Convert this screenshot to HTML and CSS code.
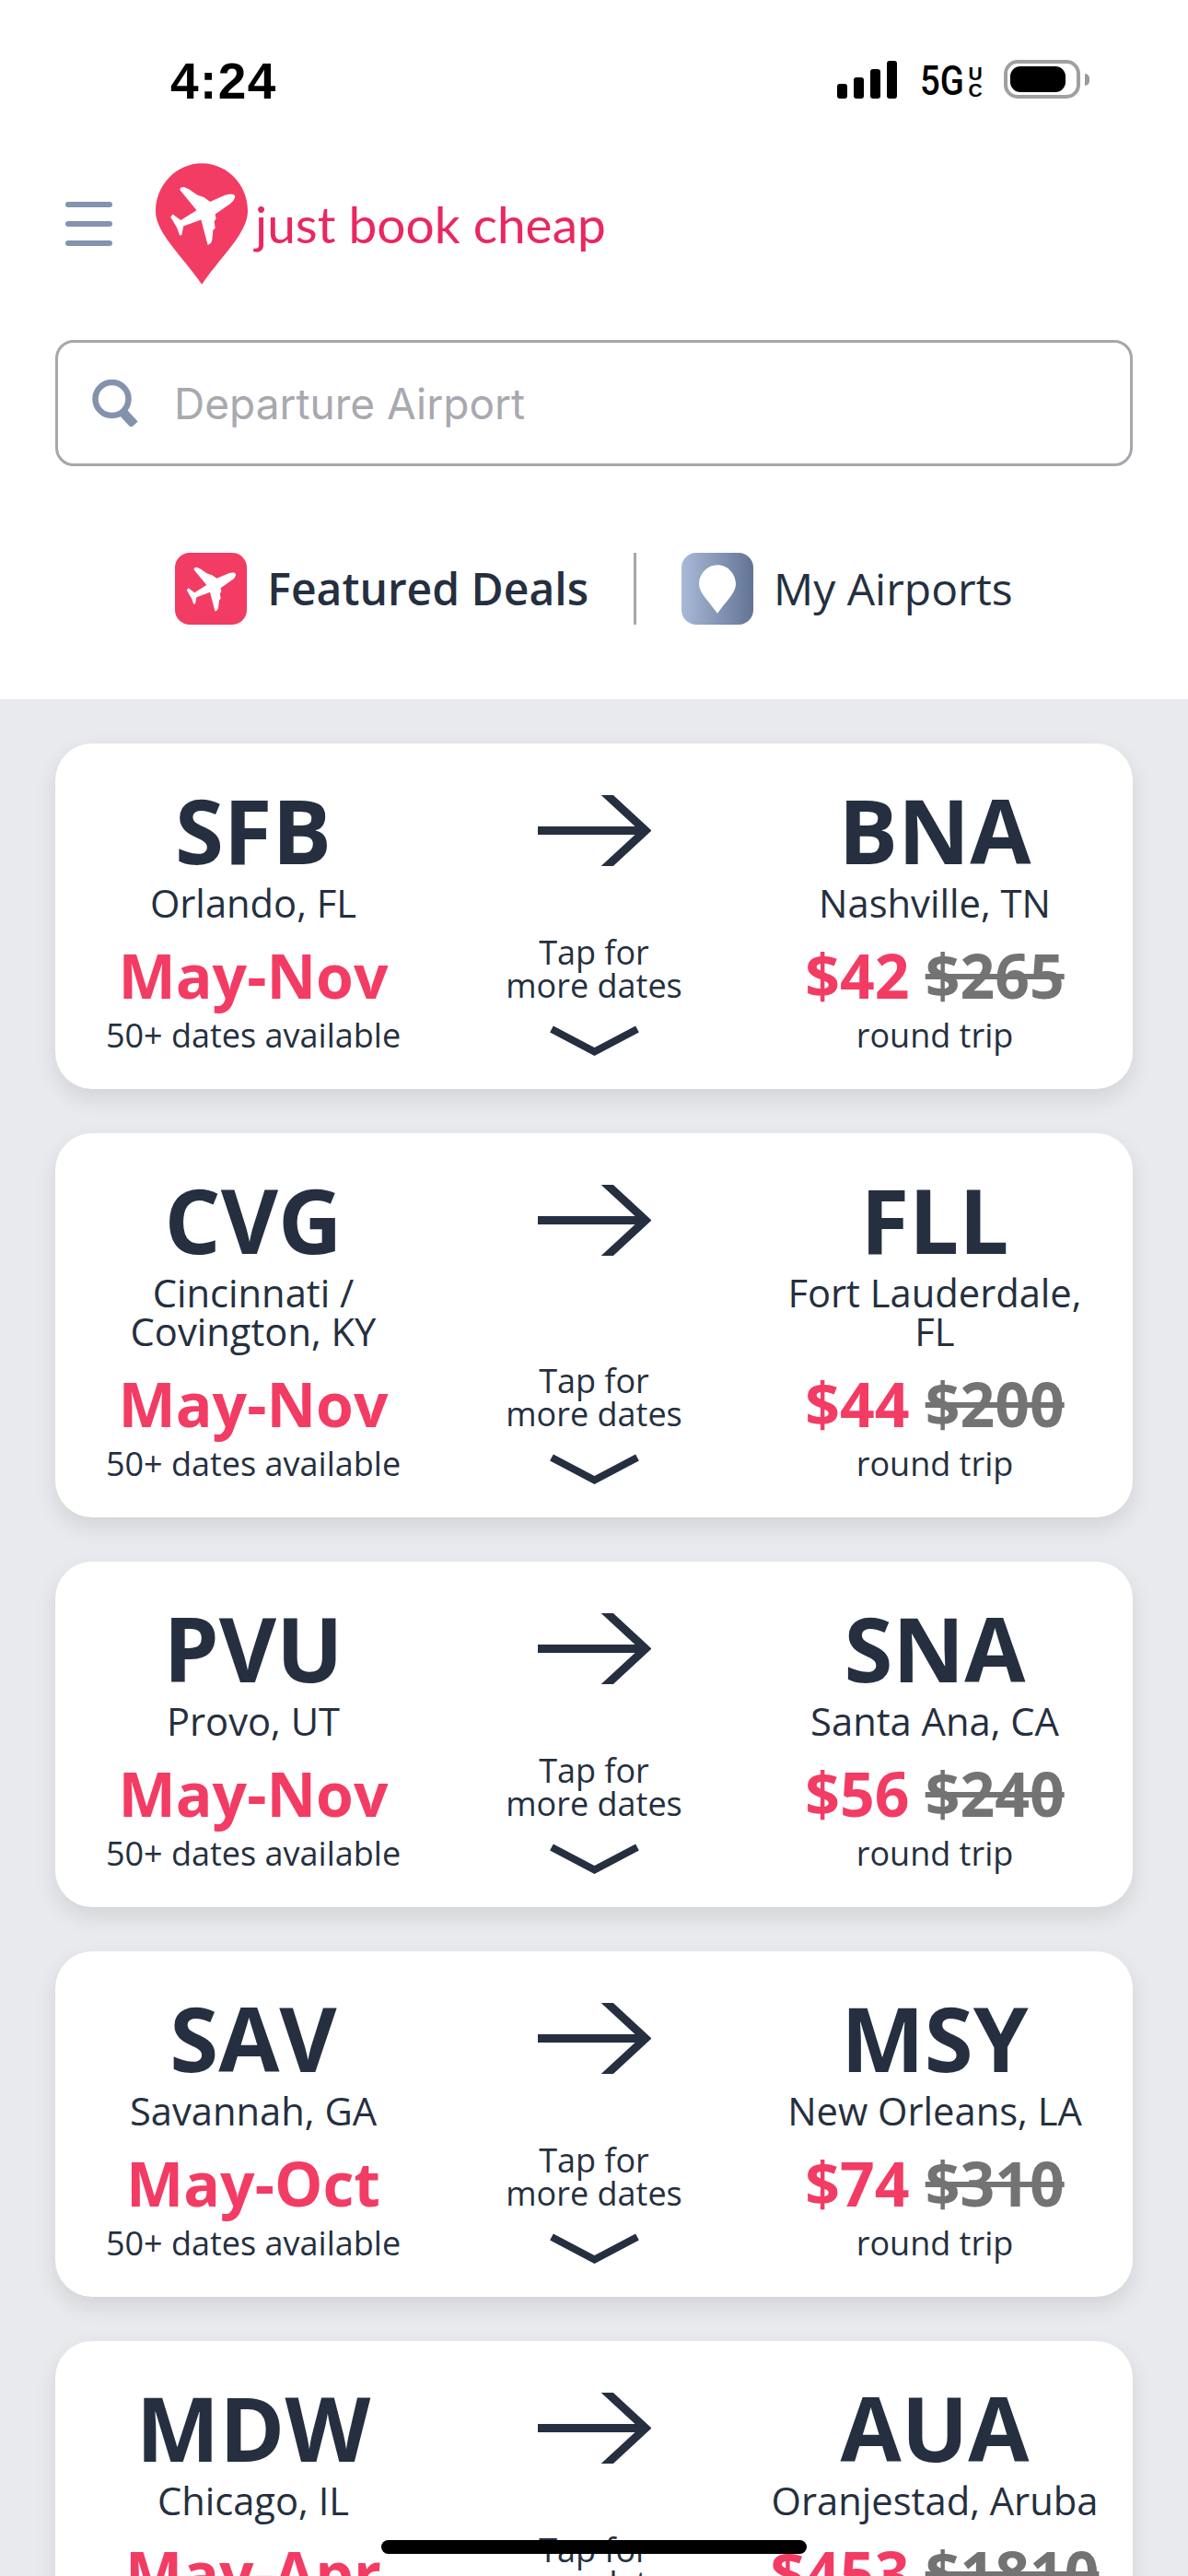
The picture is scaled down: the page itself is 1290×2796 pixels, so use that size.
FILE: index.html
```html
<!DOCTYPE html>
<html lang="en">
<head>
<meta charset="utf-8">
<title>just book cheap</title>
<link rel="stylesheet" href="styles.css">
</head>
<body>
<svg class="defs" width="0" height="0" aria-hidden="true">
  <symbol id="plane" viewBox="70 94 222 198">
    <path d="M288 126C290 136 280 147 272 153L222 188L225 203L219 212L222 235L215 241L212 272C211 282 204 290 197 290L175 206L116 228L110 258L103 258L95 235L73 197L80 188L107 208L160 175L105 108C102 100 110 95 118 97L135 105L148 114L163 124L184 131L205 146L255 124C268 120 284 118 288 126Z"/>
  </symbol>
  <symbol id="arrow" viewBox="0 0 123 77">
    <path d="M0 38.5H114" fill="none" stroke="currentColor" stroke-width="9"/>
    <polyline points="72,-3 117,38.5 72,80" fill="none" stroke="currentColor" stroke-width="9"/>
  </symbol>
  <symbol id="chevron" viewBox="0 0 99 33">
    <polyline points="3,4 49.5,28.5 96,4" fill="none" stroke="currentColor" stroke-width="8"/>
  </symbol>
</svg>

<header class="header">
  <div class="status">
    <span class="time">4:24</span>
    <div class="status-right">
      <div class="signal"><i class="bar bar-1"></i><i class="bar bar-2"></i><i class="bar bar-3"></i><i class="bar bar-4"></i></div>
      <span class="net">5G</span>
      <span class="uc"><b>U</b><b>C</b></span>
      <div class="battery"><i class="battery-fill"></i></div>
      <i class="battery-nub"></i>
    </div>
  </div>

  <div class="nav">
    <div class="burger"><i></i><i></i><i></i></div>
    <svg class="logo-pin" viewBox="27 22 301 396">
      <path class="pin-shape" d="M178 22C262 22 328 94 328 178C328 250 244 322 178 418C112 322 27 250 27 178C27 94 94 22 178 22Z"/>
      <use href="#plane" x="73" y="96" width="217" height="195" fill="#fff"/>
    </svg>
    <span class="logo-text">just book cheap</span>
  </div>

  <div class="search">
    <svg class="search-icon" viewBox="0 0 51 51">
      <circle cx="21.5" cy="21" r="18" fill="none" stroke="#8393ae" stroke-width="6.5"/>
      <path d="M33 35L46 49" stroke="#8393ae" stroke-width="10" fill="none"/>
    </svg>
    <span class="search-text">Departure Airport</span>
  </div>

  <div class="tabs">
    <div class="tab tab-active">
      <span class="tab-icon tab-icon-pink"><svg class="tab-plane"><use href="#plane" fill="#fff"/></svg></span>
      <span>Featured Deals</span>
    </div>
    <i class="tab-divider"></i>
    <div class="tab">
      <span class="tab-icon tab-icon-blue">
        <svg class="tab-pin" viewBox="27 22 301 396"><path fill="#fff" d="M178 22C262 22 328 94 328 178C328 250 244 322 178 418C112 322 27 250 27 178C27 94 94 22 178 22Z"/></svg>
      </span>
      <span>My Airports</span>
    </div>
  </div>
</header>

<main class="list">
  <article class="card">
    <div class="col">
      <div class="code">SFB</div>
      <div class="city">Orlando, FL</div>
      <div class="big pink">May-Nov</div>
      <div class="small">50+ dates available</div>
    </div>
    <div class="mid">
      <svg class="arrow"><use href="#arrow"/></svg>
      <div class="tap">
        <div class="tap-text">Tap for<br>more dates</div>
        <svg class="chevron"><use href="#chevron"/></svg>
      </div>
    </div>
    <div class="col">
      <div class="code">BNA</div>
      <div class="city">Nashville, TN</div>
      <div class="big"><span class="pink">$42</span> <s class="old">$265</s></div>
      <div class="small">round trip</div>
    </div>
  </article>

  <article class="card">
    <div class="col">
      <div class="code">CVG</div>
      <div class="city">Cincinnati /<br>Covington, KY</div>
      <div class="big pink">May-Nov</div>
      <div class="small">50+ dates available</div>
    </div>
    <div class="mid">
      <svg class="arrow"><use href="#arrow"/></svg>
      <div class="tap">
        <div class="tap-text">Tap for<br>more dates</div>
        <svg class="chevron"><use href="#chevron"/></svg>
      </div>
    </div>
    <div class="col">
      <div class="code">FLL</div>
      <div class="city">Fort Lauderdale,<br>FL</div>
      <div class="big"><span class="pink">$44</span> <s class="old">$200</s></div>
      <div class="small">round trip</div>
    </div>
  </article>

  <article class="card">
    <div class="col">
      <div class="code">PVU</div>
      <div class="city">Provo, UT</div>
      <div class="big pink">May-Nov</div>
      <div class="small">50+ dates available</div>
    </div>
    <div class="mid">
      <svg class="arrow"><use href="#arrow"/></svg>
      <div class="tap">
        <div class="tap-text">Tap for<br>more dates</div>
        <svg class="chevron"><use href="#chevron"/></svg>
      </div>
    </div>
    <div class="col">
      <div class="code">SNA</div>
      <div class="city">Santa Ana, CA</div>
      <div class="big"><span class="pink">$56</span> <s class="old">$240</s></div>
      <div class="small">round trip</div>
    </div>
  </article>

  <article class="card">
    <div class="col">
      <div class="code">SAV</div>
      <div class="city">Savannah, GA</div>
      <div class="big pink">May-Oct</div>
      <div class="small">50+ dates available</div>
    </div>
    <div class="mid">
      <svg class="arrow"><use href="#arrow"/></svg>
      <div class="tap">
        <div class="tap-text">Tap for<br>more dates</div>
        <svg class="chevron"><use href="#chevron"/></svg>
      </div>
    </div>
    <div class="col">
      <div class="code">MSY</div>
      <div class="city">New Orleans, LA</div>
      <div class="big"><span class="pink">$74</span> <s class="old">$310</s></div>
      <div class="small">round trip</div>
    </div>
  </article>

  <article class="card">
    <div class="col">
      <div class="code">MDW</div>
      <div class="city">Chicago, IL</div>
      <div class="big pink">May-Apr</div>
      <div class="small">50+ dates available</div>
    </div>
    <div class="mid">
      <svg class="arrow"><use href="#arrow"/></svg>
      <div class="tap">
        <div class="tap-text">Tap for<br>more dates</div>
        <svg class="chevron"><use href="#chevron"/></svg>
      </div>
    </div>
    <div class="col">
      <div class="code">AUA</div>
      <div class="city">Oranjestad, Aruba</div>
      <div class="big"><span class="pink">$453</span> <s class="old">$1810</s></div>
      <div class="small">round trip</div>
    </div>
  </article>
</main>

<div class="home-indicator"></div>
</body>
</html>
```

FILE: styles.css
```css
* { box-sizing: border-box; }
html, body { margin: 0; padding: 0; height: 2796px; overflow: hidden; }
body { position: relative; background: #e8eaee; color: #252f40; font-family: "Open Sans", "Noto Sans", sans-serif; }
i { display: block; }
.defs { position: absolute; }

.header { background: #fff; height: 759px; }

.status { height: 177px; display: flex; justify-content: space-between; align-items: flex-start; padding: 0 107px 0 185px; }
.time { margin-top: 60px; font: 700 55px/56px "Liberation Sans", Arial, sans-serif; letter-spacing: 1.4px; color: #000; }
.status-right { margin-top: 65px; height: 42px; display: flex; align-items: center; }
.signal { display: flex; align-items: flex-end; gap: 7px; height: 41px; margin-top: 1px; }
.bar { width: 11px; background: #000; border-radius: 3px; }
.bar-1 { height: 16px; }
.bar-2 { height: 23px; }
.bar-3 { height: 32px; }
.bar-4 { height: 41px; }
.net { width: 48px; margin-left: 25px; margin-top: 4px; font: 500 45px/32px Roboto, Arial, sans-serif; color: #000; transform: scaleX(.85); transform-origin: left center; white-space: nowrap; }
.uc { width: 14px; margin-left: 5px; margin-top: 4px; display: flex; flex-direction: column; gap: 3px; align-items: center; font: 700 21px/15px "Liberation Sans", Arial, sans-serif; color: #000; }
.uc b { display: block; }
.battery { width: 83px; height: 42px; margin-left: 24px; border: 4px solid #a0a0a0; border-radius: 15px; padding: 3px; }
.battery-fill { width: 60px; height: 100%; background: #000; border-radius: 11px; }
.battery-nub { width: 5px; height: 13px; margin-left: 5px; background: #9a9a9a; border-radius: 0 5px 5px 0; }

.nav { height: 132px; display: flex; align-items: center; padding-left: 71px; }
.burger { width: 51px; display: flex; flex-direction: column; gap: 15px; }
.burger i { height: 6px; border-radius: 3px; background: #8594ae; }
.logo-pin { width: 100px; height: 132px; margin-left: 47px; flex: none; }
.pin-shape { fill: #f23c64; }
.logo-text { margin-left: 8px; margin-top: 0; font: 400 55px/60px Lato, sans-serif; color: #ea2760; white-space: nowrap; }

.search { margin: 60px 60px 0; height: 137px; border: 3px solid #a6a6ac; border-radius: 20px; display: flex; align-items: center; padding-left: 37px; gap: 38px; background: #fff; }
.search-icon { width: 51px; height: 51px; flex: none; }
.search-text { font: 400 46px/60px Inter, sans-serif; color: #a8a9af; }

.tabs { margin-top: 94px; height: 78px; display: flex; justify-content: center; align-items: stretch; }
.tab { display: flex; align-items: center; gap: 22px; font-size: 48px; line-height: 78px; font-weight: 400; white-space: nowrap; }
.tab-active { font-weight: 600; }
.tab-icon { width: 78px; height: 78px; border-radius: 16px; display: flex; align-items: center; justify-content: center; flex: none; }
.tab-icon-pink { background: #f23c64; }
.tab-icon-blue { background: linear-gradient(90deg, #a9b9d8, #627494); }
.tab-plane { width: 55px; height: 49px; }
.tab-pin { width: 40px; height: 53px; }
.tab-divider { width: 3px; margin: 0 49px; background: #a6a6ac; }

.list { padding: 48px 60px 0; display: flex; flex-direction: column; gap: 48px; }
.card { display: grid; grid-template-columns: repeat(3, 370px); padding: 36px 30px 38px; background: #fff; border-radius: 40px; box-shadow: 0 10px 25px rgba(0, 0, 0, .10); flex: none; }
.col { text-align: center; display: flex; flex-direction: column; }
.code { font-size: 96px; line-height: 116px; font-weight: 700; }
.city { font-size: 41.7px; line-height: 42px; white-space: nowrap; }
.big { margin-top: 22px; font-size: 66px; line-height: 70px; font-weight: 700; white-space: nowrap; }
.small { margin-top: 11px; font-size: 36px; line-height: 40px; }
.pink { color: #f23c64; }
.old { color: #737373; }

.mid { display: flex; flex-direction: column; align-items: center; justify-content: space-between; }
.arrow { width: 123px; height: 77px; margin-top: 20px; }
.tap { display: flex; flex-direction: column; align-items: center; }
.tap-text { font-size: 36px; line-height: 36px; text-align: center; white-space: nowrap; }
.chevron { width: 99px; height: 33px; margin-top: 25px; margin-bottom: -2px; }

.home-indicator { position: absolute; left: 414px; top: 2757px; width: 462px; height: 15px; border-radius: 8px; background: #000; }
```
